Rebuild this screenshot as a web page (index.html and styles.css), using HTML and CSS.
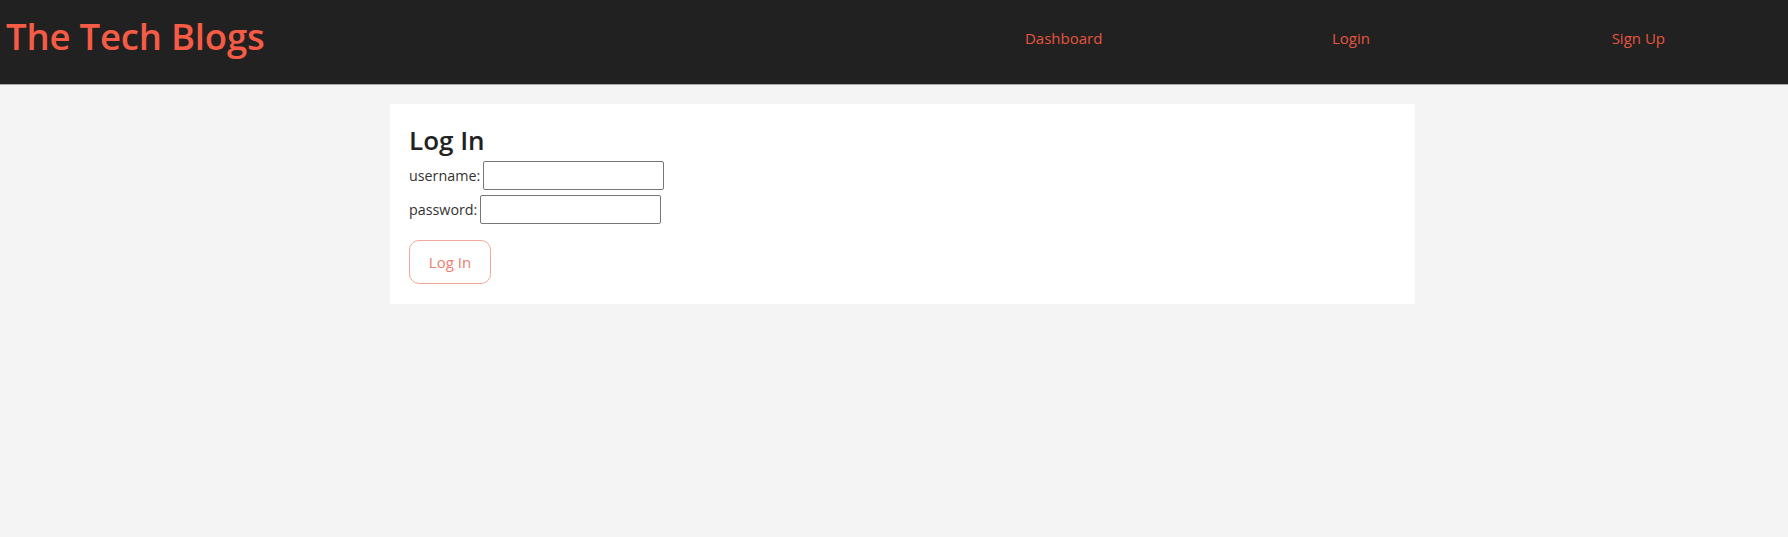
FILE: index.html
```html
<!DOCTYPE html>
<html>
<head>
<meta charset="utf-8">
<title>The Tech Blogs</title>
<link rel="stylesheet" href="styles.css">
</head>
<body>
<header class="site-header">
  <h1 class="brand">The Tech Blogs</h1>
  <nav class="nav">
    <a class="nav-link" href="#">Dashboard</a>
    <a class="nav-link" href="#">Login</a>
    <a class="nav-link" href="#">Sign Up</a>
  </nav>
</header>
<main class="main">
  <section class="card">
    <h2 class="card-title">Log In</h2>
    <form class="login-form">
      <div class="field"><label class="label">username:</label><input class="input" type="text"></div>
      <div class="field"><label class="label">password:</label><input class="input" type="password"></div>
      <button class="btn" type="button">Log In</button>
    </form>
  </section>
</main>
</body>
</html>
```
FILE: styles.css
```css
html, body {
  margin: 0;
  padding: 0;
}
body {
  background: #f4f4f4;
  font-family: "Open Sans", "Noto Sans", sans-serif;
  color: #333;
  height: 537px;
}
.site-header {
  height: 84px;
  background: #212121;
  border-bottom: 1px solid #a8a8a8;
  display: flex;
  align-items: center;
  justify-content: space-between;
}
.brand {
  margin: 0 0 12px 6px;
  font-size: 36.5px;
  font-weight: 600;
  color: #f55b45;
  letter-spacing: -0.2px;
}
.nav {
  width: 862px;
  display: flex;
  margin: 0 6px 9px 0;
}
.nav-link {
  flex: 1;
  text-align: center;
  color: #e5553f;
  text-decoration: none;
  font-size: 15px;
}
.main {
  padding-top: 19px;
}
.card {
  margin-left: 390px;
  width: 1025px;
  box-sizing: border-box;
  background: #fff;
  padding: 20px 19px 20px;
}
.card-title {
  margin: 0;
  font-size: 26px;
  font-weight: 600;
  color: #222;
  line-height: 32px;
}
.login-form {
  display: flex;
  flex-direction: column;
  align-items: flex-start;
}
.field {
  display: flex;
  align-items: center;
  gap: 3px;
  margin-top: 5px;
}
.field:first-child {
  margin-top: 5px;
}
.label {
  font-size: 14.3px;
  color: #333;
}
.input {
  width: 181px;
  height: 29px;
  box-sizing: border-box;
  border: 1px solid #767676;
  border-radius: 2px;
  padding: 1px 2px;
  margin: 0;
}
.btn {
  margin-top: 16px;
  width: 82px;
  height: 44px;
  background: #fff;
  border: 1.5px solid #f4a69b;
  border-radius: 10px;
  color: #ef7d6d;
  font-family: inherit;
  font-size: 15px;
}
```
